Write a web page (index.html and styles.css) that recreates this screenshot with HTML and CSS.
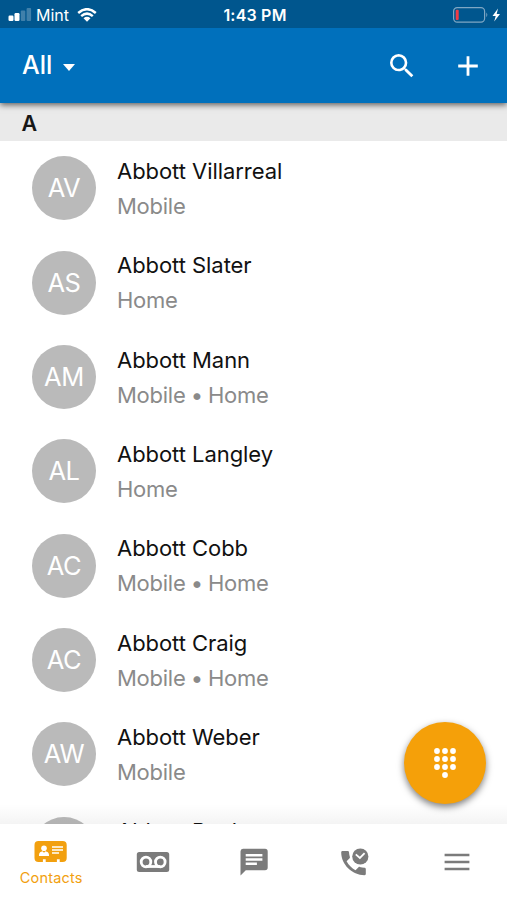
FILE: index.html
```html
<!DOCTYPE html>
<html lang="en">
<head>
<meta charset="utf-8">
<title>Contacts</title>
<link rel="stylesheet" href="styles.css">
</head>
<body>
<div class="app">
  <div class="status">
    <div class="carrier">
      <svg width="24" height="14" viewBox="0 0 24 14" fill="#fff"><rect x="0.5" y="7.5" width="5" height="5.5" rx="1.2"/><rect x="6.5" y="5" width="5" height="8" rx="1.2"/><rect x="12.8" y="2.5" width="4.5" height="10.5" rx="1" opacity=".25"/><rect x="18.6" y="0" width="4.5" height="13" rx="1" opacity=".25"/></svg>
      <span class="network">Mint</span>
      <svg width="20" height="14" viewBox="0 0 20 14" fill="none" stroke="#fff" stroke-width="2.5"><path d="M1.2 5Q10-2.6 18.8 5M4.2 8.1Q10 3.2 15.8 8.1"/><path d="M6.5 10.2Q10 7.4 13.5 10.2L10 13.8Z" fill="#fff" stroke="none"/></svg>
    </div>
    <span class="time">1:43 PM</span>
    <div class="power">
      <svg width="48" height="16" viewBox="0 0 48 16"><rect x=".6" y=".6" width="31" height="14.6" rx="3.6" fill="none" stroke="#7fa7c4" stroke-width="1.2"/><rect x="2.7" y="2.7" width="3" height="10.4" rx="1" fill="#f23b45"/><path d="M33.3 5.5q2 2.3 0 4.8z" fill="#7fa7c4"/><path d="M45 1.5L39.5 9h3.2l-1.5 5.5L47 7h-3.3z" fill="#fff"/></svg>
    </div>
  </div>
  <header class="header">
    <div class="filter"><span>All</span><i class="caret"></i></div>
    <div class="actions">
      <svg class="search" width="32" height="32" viewBox="0 0 24 24" fill="#fff"><path d="M15.5 14h-.79l-.28-.27A6.47 6.47 0 0 0 16 9.5 6.5 6.5 0 1 0 9.5 16c1.61 0 3.09-.59 4.23-1.57l.27.28v.79l5 4.99L20.49 19zm-6 0C7.01 14 5 11.99 5 9.5S7.01 5 9.5 5 14 7.01 14 9.5 11.99 14 9.5 14z"/></svg>
      <svg width="20" height="20" viewBox="0 0 20 20" stroke="#fff" stroke-width="2.8"><path d="M10 .2v19.6M.2 10h19.6"/></svg>
    </div>
  </header>
  <main class="content">
    <h2 class="section">A</h2>
    <ul class="list">
      <li class="row"><span class="avatar">AV</span><div class="info"><p class="name">Abbott Villarreal</p><p class="type">Mobile</p></div></li>
      <li class="row"><span class="avatar">AS</span><div class="info"><p class="name">Abbott Slater</p><p class="type">Home</p></div></li>
      <li class="row"><span class="avatar">AM</span><div class="info"><p class="name">Abbott Mann</p><p class="type">Mobile • Home</p></div></li>
      <li class="row"><span class="avatar">AL</span><div class="info"><p class="name">Abbott Langley</p><p class="type">Home</p></div></li>
      <li class="row"><span class="avatar">AC</span><div class="info"><p class="name">Abbott Cobb</p><p class="type">Mobile • Home</p></div></li>
      <li class="row"><span class="avatar">AC</span><div class="info"><p class="name">Abbott Craig</p><p class="type">Mobile • Home</p></div></li>
      <li class="row"><span class="avatar">AW</span><div class="info"><p class="name">Abbott Weber</p><p class="type">Mobile</p></div></li>
      <li class="row"><span class="avatar"></span><div class="info"><p class="name">Abbott Becker</p><p class="type"></p></div></li>
    </ul>
    <div class="fade"></div>
  </main>
  <nav class="tabs">
    <div class="tab active">
      <svg width="34" height="22" viewBox="0 0 34 22"><path fill="#f2a00f" d="M4.5 0h24.2a4 4 0 0 1 4 4v13a4 4 0 0 1-4 4h-3v-2.8h-2.8V21H11.7v-2.8H8.9V21H4.5a4 4 0 0 1-4-4V4a4 4 0 0 1 4-4z"/><circle cx="10" cy="7.2" r="2.8" fill="#fff"/><path fill="#fff" d="M5 15v-1.2c0-2 1.7-3.2 3.5-3.5l1.5 1.4 1.5-1.4c1.8.3 3.5 1.5 3.5 3.5V15z"/><path d="M18 6h11M18 9h11M18 12h7" stroke="#fff" stroke-width="1.6"/></svg>
      <span>Contacts</span>
    </div>
    <div class="tab"><svg width="34" height="22" viewBox="0 0 34 22"><rect x=".8" y="1" width="32.4" height="20" rx="2.5" fill="#7b7b7b"/><g fill="none" stroke="#fff" stroke-width="2.8"><circle cx="10" cy="11" r="4.8"/><circle cx="24.3" cy="11" r="4.8"/><path d="M10 15.5h14.3"/></g></svg></div>
    <div class="tab"><svg width="28" height="28" viewBox="0 0 28 28"><path fill="#7b7b7b" d="M3 .7h22a2.7 2.7 0 0 1 2.7 2.7v16.2a2.7 2.7 0 0 1-2.7 2.7H5.8L.5 27.5V3.4A2.7 2.7 0 0 1 3 .7z"/><path d="M5.7 7.3h16.7M5.7 11.5h16.7M5.7 15.7h11.2" stroke="#fff" stroke-width="2.4"/></svg></div>
    <div class="tab"><svg width="28" height="28" viewBox="0 0 28 28"><path fill="#7b7b7b" d="M1.5 3h5.2c.7 0 1.2.5 1.3 1.2.1 1.7.4 3.2.9 4.7.1.5 0 1-.3 1.3l-3 3.1c2 3.8 5 6.8 8.9 8.9l3-3c.4-.3.8-.4 1.3-.3 1.5.5 3.1.8 4.7.8.8 0 1.3.6 1.3 1.3v5c0 .7-.5 1.2-1.3 1.2C11 27.2.2 16.5.2 4.3.2 3.6.7 3 1.5 3z"/><circle cx="19.3" cy="8.5" r="8.1" fill="#7b7b7b"/><path d="M14.8 6.3l4.1 3.7 4.7-4.8" fill="none" stroke="#fff" stroke-width="1.8"/></svg></div>
    <div class="tab"><svg width="26" height="18" viewBox="0 0 26 18"><path d="M.6 2h24.8M.6 9h24.8M.6 16h24.8" stroke="#7b7b7b" stroke-width="2.6"/></svg></div>
  </nav>
  <button class="fab" aria-label="Keypad"><svg width="24" height="32" viewBox="0 0 24 32" fill="#fff"><circle cx="4" cy="4" r="2.9"/><circle cx="12" cy="4" r="2.9"/><circle cx="20" cy="4" r="2.9"/><circle cx="4" cy="12" r="2.9"/><circle cx="12" cy="12" r="2.9"/><circle cx="20" cy="12" r="2.9"/><circle cx="4" cy="20" r="2.9"/><circle cx="12" cy="20" r="2.9"/><circle cx="20" cy="20" r="2.9"/><circle cx="12" cy="28" r="2.9"/></svg></button>
</div>
</body>
</html>
```
FILE: styles.css
```css
* { box-sizing: border-box; margin: 0; padding: 0; }
body { font-family: Inter, "Liberation Sans", sans-serif; background: #fff; }
svg { display: block; flex: none; }
.app { position: relative; height: 900px; display: flex; flex-direction: column; overflow: hidden; }
.status { height: 28px; flex: none; background: #00568e; color: #fff; display: grid; grid-template-columns: 1fr auto 1fr; align-items: center; padding: 2px 6px 0 8px; z-index: 2; }
.carrier { display: flex; align-items: center; }
.network { font-size: 16px; line-height: 20px; margin: 0 8px 0 4px; }
.time { font-size: 16px; line-height: 20px; font-weight: 600; letter-spacing: .2px; padding-left: 1px; }
.power { display: flex; justify-content: flex-end; }
.header { height: 75px; flex: none; background: #0070bc; color: #fff; display: flex; align-items: center; justify-content: space-between; padding: 0 29px 0 22px; box-shadow: 0 2px 6px rgba(0,0,0,.6); z-index: 1; }
.filter { display: flex; align-items: center; gap: 11px; font-size: 25px; font-weight: 500; padding-bottom: 1px; }
.caret { border: 6.5px solid transparent; border-top: 7px solid #fff; border-bottom: 0; margin-top: 4px; }
.actions { display: flex; align-items: center; gap: 40px; }
.content { position: relative; flex: 1; min-height: 0; overflow: hidden; }
.section { height: 38px; background: #eaeaea; color: #171717; font-size: 21.5px; font-weight: 600; line-height: 41px; padding-left: 21.5px; }
.list { list-style: none; }
.row { height: 94.35px; display: flex; align-items: center; gap: 21px; padding-left: 32px; }
.avatar { width: 64px; height: 64px; border-radius: 50%; background: #bababa; color: #fff; font-size: 25.5px; line-height: 64px; letter-spacing: -.4px; text-align: center; flex: none; }
.info { padding-top: 1.4px; }
.name, .type { font-size: 22px; line-height: 35px; white-space: nowrap; }
.name { color: #111; letter-spacing: -.05px; }
.type { color: #8a8a8a; letter-spacing: -.25px; word-spacing: -.8px; min-height: 35px; }
.fade { position: absolute; left: 0; right: 0; bottom: 0; height: 20px; background: linear-gradient(rgba(0,0,0,0), rgba(0,0,0,.045)); }
.tabs { height: 76px; flex: none; background: #fff; display: grid; grid-template-columns: repeat(5, 1fr); }
.tab { display: flex; flex-direction: column; align-items: center; justify-content: center; padding-left: 1px; }
.active { color: #f2a00f; font-size: 14.5px; line-height: 20px; gap: 5px; padding-top: 5px; letter-spacing: .2px; }
.fab { position: absolute; left: 404px; top: 722px; width: 82px; height: 82px; border: 0; border-radius: 50%; background: #f5a009; box-shadow: 0 3px 7px rgba(0,0,0,.5); display: flex; align-items: center; justify-content: center; z-index: 3; }
```
